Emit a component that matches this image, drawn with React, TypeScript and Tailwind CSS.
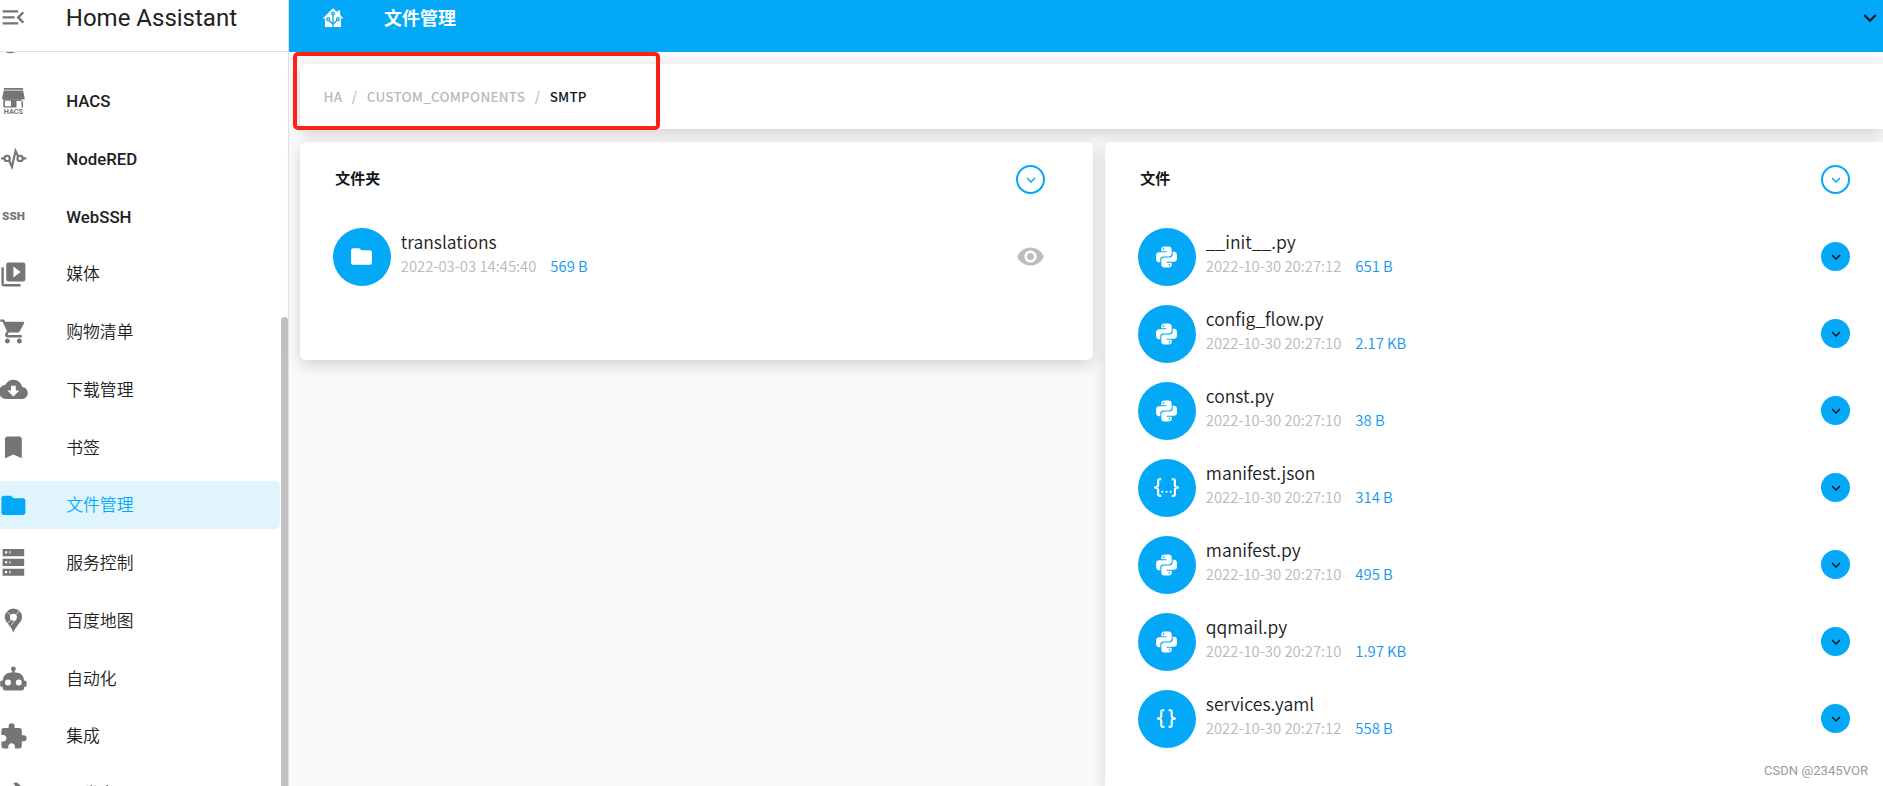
import type { ReactNode } from "react";
import {
  MdBookmark,
  MdCloudDownload,
  MdFolder,
  MdShoppingCart,
  MdVisibility,
} from "react-icons/md";

const paths = {
  menuOpen:
    "M21,15.61L19.59,17L14.58,12L19.59,7L21,8.39L17.44,12L21,15.61M3,6H16V8H3V6M3,13V11H13V13H3M3,18V16H16V18H3Z",
  media:
    "M4,6H2V20A2,2 0 0,0 4,22H18V20H4V6M20,2H8A2,2 0 0,0 6,4V16A2,2 0 0,0 8,18H20A2,2 0 0,0 22,16V4A2,2 0 0,0 20,2M12,14.5V5.5L18,10L12,14.5Z",
  robot:
    "M12,2A2,2 0 0,1 14,4C14,4.74 13.6,5.39 13,5.73V7H14A7,7 0 0,1 21,14H22A1,1 0 0,1 23,15V18A1,1 0 0,1 22,19H21V20A2,2 0 0,1 19,22H5A2,2 0 0,1 3,20V19H2A1,1 0 0,1 1,18V15A1,1 0 0,1 2,14H3A7,7 0 0,1 10,7H11V5.73C10.4,5.39 10,4.74 10,4A2,2 0 0,1 12,2M7.5,13A2.5,2.5 0 0,0 5,15.5A2.5,2.5 0 0,0 7.5,18A2.5,2.5 0 0,0 10,15.5A2.5,2.5 0 0,0 7.5,13M16.5,13A2.5,2.5 0 0,0 14,15.5A2.5,2.5 0 0,0 16.5,18A2.5,2.5 0 0,0 19,15.5A2.5,2.5 0 0,0 16.5,13Z",
  puzzle:
    "M20.5,11H19V7C19,5.89 18.1,5 17,5H13V3.5A2.5,2.5 0 0,0 10.5,1A2.5,2.5 0 0,0 8,3.5V5H4A2,2 0 0,0 2,7V10.8H3.5C5,10.8 6.2,12 6.2,13.5C6.2,15 5,16.2 3.5,16.2H2V20A2,2 0 0,0 4,22H7.8V20.5C7.8,19 9,17.8 10.5,17.8C12,17.8 13.2,19 13.2,20.5V22H17A2,2 0 0,0 19,20V16H20.5A2.5,2.5 0 0,0 23,13.5A2.5,2.5 0 0,0 20.5,11Z",
  hammer:
    "M2,19.63L13.43,8.2L12.72,7.5L14.14,6.07L12,3.89C13.2,2.7 15.09,2.7 16.27,3.89L19.87,7.5L18.45,8.91H21.29L22,9.62L18.45,13.21L17.74,12.5V9.62L16.27,11.04L15.56,10.33L4.13,21.76L2,19.63Z",
  python:
    "M19.14,7.5A2.86,2.86 0 0,1 22,10.36V14.14A2.86,2.86 0 0,1 19.14,17H12C12,17.39 12.32,17.96 12.71,17.96H17V19.64A2.86,2.86 0 0,1 14.14,22.5H9.86A2.86,2.86 0 0,1 7,19.64V15.89C7,14.31 8.28,13.04 9.86,13.04H15.11C16.69,13.04 17.96,11.76 17.96,10.18V7.5H19.14M14.86,19.29C14.46,19.29 14.14,19.59 14.14,20.18C14.14,20.77 14.46,20.89 14.86,20.89A0.71,0.71 0 0,0 15.57,20.18C15.57,19.59 15.25,19.29 14.86,19.29M4.86,17.5C3.28,17.5 2,16.22 2,14.64V10.86C2,9.28 3.28,8 4.86,8H12C12,7.61 11.68,7.04 11.29,7.04H7V5.36C7,3.78 8.28,2.5 9.86,2.5H14.14C15.72,2.5 17,3.78 17,5.36V9.11C17,10.69 15.72,11.96 14.14,11.96H8.89C7.31,11.96 6.04,13.24 6.04,14.82V17.5H4.86M9.14,5.71C9.54,5.71 9.86,5.41 9.86,4.82C9.86,4.23 9.54,4.11 9.14,4.11A0.71,0.71 0 0,0 8.43,4.82C8.43,5.41 8.75,5.71 9.14,5.71Z",
  json: "M5,3H7V5H5V10A2,2 0 0,1 3,12A2,2 0 0,1 5,14V19H7V21H5C3.93,20.73 3,20.1 3,19V15A2,2 0 0,0 1,13H0V11H1A2,2 0 0,0 3,9V5A2,2 0 0,1 5,3M19,3A2,2 0 0,1 21,5V9A2,2 0 0,0 23,11H24V13H23A2,2 0 0,0 21,15V19A2,2 0 0,1 19,21H17V19H19V14A2,2 0 0,1 21,12A2,2 0 0,1 19,10V5H17V3H19M12,15A1,1 0 0,1 13,16A1,1 0 0,1 12,17A1,1 0 0,1 11,16A1,1 0 0,1 12,15M8,15A1,1 0 0,1 9,16A1,1 0 0,1 8,17A1,1 0 0,1 7,16A1,1 0 0,1 8,15M16,15A1,1 0 0,1 17,16A1,1 0 0,1 16,17A1,1 0 0,1 15,16A1,1 0 0,1 16,15Z",
  braces:
    "M8,3A2,2 0 0,0 6,5V9A2,2 0 0,1 4,11H3V13H4A2,2 0 0,1 6,15V19A2,2 0 0,0 8,21H10V19H8V14A2,2 0 0,0 6,12A2,2 0 0,0 8,10V5H10V3M16,3A2,2 0 0,1 18,5V9A2,2 0 0,0 20,11H21V13H20A2,2 0 0,0 18,15V19A2,2 0 0,1 16,21H14V19H16V14A2,2 0 0,1 18,12A2,2 0 0,1 16,10V5H14V3H16Z",
  chevron: "M7.41,8.58L12,13.17L16.59,8.58L18,10L12,16L6,10L7.41,8.58Z",
};

function Icon({ d, className }: { d: string; className?: string }) {
  return (
    <svg viewBox="0 0 24 24" fill="currentColor" className={className}>
      <path d={d} />
    </svg>
  );
}

const side = "size-[28.8px]";

const HacsIcon = () => (
  <svg
    viewBox="0 0 24 24"
    fill="currentColor"
    className="size-[28.8px] overflow-visible"
  >
    <path d="M4 1.6h16v1.6H4z M4 3.8h16l1.3 5.6v1.8H2.7V9.4z" />
    <path
      fillRule="evenodd"
      d="M3.6 11h9.8v7H3.6z M5 12.2v4.6h5V12.2z M13.4 11H20v1.4h-6.6z M18.8 11H20v7h-1.2z M14.6 12.400v5.600h-1.200v-5.600z"
    />
    <text
      x="4"
      y="23.5"
      textLength="16"
      lengthAdjust="spacingAndGlyphs"
      className="font-['Roboto',sans-serif] text-[6px] font-bold"
    >
      HACS
    </text>
  </svg>
);

const NodeRedIcon = () => (
  <svg
    viewBox="0 0 24 24"
    fill="none"
    stroke="currentColor"
    strokeWidth="1.8"
    className={side}
  >
    <path d="M1.8 12h3 M19.6 12h3.2 M8.4 13.8l2.4 5.200 3-13.200 2.200 4.600" />
    <circle cx="6.8" cy="12" r="2.2" />
    <circle cx="17.6" cy="12" r="2.2" />
  </svg>
);

const SshIcon = () => (
  <svg viewBox="0 0 24 24" fill="currentColor" className={side}>
    <text
      x="2.6"
      y="15.2"
      textLength="19"
      lengthAdjust="spacingAndGlyphs"
      className="font-['Roboto',sans-serif] text-[8.8px] font-black"
    >
      SSH
    </text>
  </svg>
);

const ServerIcon = () => (
  <svg viewBox="0 0 24 24" fill="currentColor" className={side}>
    <path
      fillRule="evenodd"
      d="M3 .8h18v6H3z M5 2.8v1.8h1.8V2.8z M8.6 2.8v1.8h1V2.8z M3 9h18v6H3z M5 11v1.8h1.8V11z M8.6 11v1.8h1V11z M3 17.2h18v6H3z M5 19.2V21h1.8v-1.8z M8.6 19.2V21h1v-1.8z"
    />
  </svg>
);

const MapIcon = () => (
  <svg viewBox="0 0 24 24" className={side}>
    <path
      fill="currentColor"
      fillRule="evenodd"
      d="M12 2a7.2 7.2 0 0 0-7.2 7.2c0 3.2 2 4.7 3.6 6.8C9.9 17.9 11 19.5 12 22c1-2.5 2.1-4.1 3.6-6 1.6-2.1 3.6-3.6 3.6-6.8A7.2 7.2 0 0 0 12 2zM12 6.5a2.9 2.9 0 1 1 0 5.8 2.9 2.9 0 0 1 0-5.8z"
    />
    <path
      fill="none"
      stroke="#fff"
      strokeWidth=".6"
      d="M6.4 4.6l3.6 3M14 7.5l3-3.4M10 11.3l-3.5 4M14 11.3l-4 4.7"
    />
  </svg>
);

const DotIcon = () => (
  <svg viewBox="0 0 24 24" fill="currentColor" className={side}>
    <circle cx="9.5" cy="12" r="8.2" />
  </svg>
);

const HomeIcon = () => (
  <svg viewBox="0 0 24 24" className="size-[24px]">
    <path
      fill="currentColor"
      d="M12 2.2l4.6 4.3V4.4h2.6v4.7L22.4 12.4H20V21H4v-8.6H1.6z"
    />
    <g fill="none" stroke="#03a9f6" strokeWidth="1.3">
      <path d="M12 8.5V21 M12 18.2l-4-3.6 M12 18.2l4-3.6" />
      <circle cx="12" cy="7.4" r="1.3" />
      <circle cx="7.2" cy="13.3" r="1.4" />
      <circle cx="16.8" cy="13.3" r="1.4" />
    </g>
  </svg>
);

type NavItem = { label: string; icon: ReactNode; active?: boolean };

const nav: NavItem[] = [
  { label: "", icon: <DotIcon /> },
  { label: "HACS", icon: <HacsIcon /> },
  { label: "NodeRED", icon: <NodeRedIcon /> },
  { label: "WebSSH", icon: <SshIcon /> },
  { label: "媒体", icon: <Icon d={paths.media} className={side} /> },
  { label: "购物清单", icon: <MdShoppingCart className={side} /> },
  { label: "下载管理", icon: <MdCloudDownload className={side} /> },
  { label: "书签", icon: <MdBookmark className={side} /> },
  { label: "文件管理", icon: <MdFolder className={side} />, active: true },
  { label: "服务控制", icon: <ServerIcon /> },
  { label: "百度地图", icon: <MapIcon /> },
  { label: "自动化", icon: <Icon d={paths.robot} className={side} /> },
  { label: "集成", icon: <Icon d={paths.puzzle} className={side} /> },
  { label: "开发者工具", icon: <Icon d={paths.hammer} className={side} /> },
];

const files = [
  { name: "__init__.py", date: "2022-10-30 20:27:12", size: "651 B", icon: paths.python },
  { name: "config_flow.py", date: "2022-10-30 20:27:10", size: "2.17 KB", icon: paths.python },
  { name: "const.py", date: "2022-10-30 20:27:10", size: "38 B", icon: paths.python },
  { name: "manifest.json", date: "2022-10-30 20:27:10", size: "314 B", icon: paths.json },
  { name: "manifest.py", date: "2022-10-30 20:27:10", size: "495 B", icon: paths.python },
  { name: "qqmail.py", date: "2022-10-30 20:27:10", size: "1.97 KB", icon: paths.python },
  { name: "services.yaml", date: "2022-10-30 20:27:12", size: "558 B", icon: paths.braces },
];

function Sidebar() {
  return (
    <aside className="flex h-full w-[289px] shrink-0 flex-col border-r border-[#e0e0e0] bg-white">
      <div className="flex h-[52px] shrink-0 items-start border-b border-[#e0e0e0] text-[#212121]">
        <Icon
          d={paths.menuOpen}
          className="mt-[3px] -ml-px size-[28.8px] shrink-0 text-[#757575]"
        />
        <span className="ml-[38px] text-[24px] leading-[36px]">
          Home Assistant
        </span>
      </div>
      <div className="flex min-h-0 flex-1 overflow-hidden">
        <nav className="-mt-[33px] w-[280px] shrink-0">
          {nav.map((item) => (
            <div
              key={item.label}
              className={`mb-[9.75px] flex h-[48px] items-center rounded-r-[5px] text-[16.8px] ${
                item.active
                  ? "bg-[#e0f4fe] text-[#03a9f6]"
                  : "text-[#757575]"
              }`}
            >
              <span className="-ml-px shrink-0">{item.icon}</span>
              <span
                className={`ml-[38.5px] pt-[2px] font-['Roboto','Noto_Sans_CJK_SC',sans-serif] ${
                  item.active ? "" : "text-[#212121]"
                } ${/^[A-Z]/.test(item.label) ? "font-medium" : "font-[350]"}`}
              >
                {item.label}
              </span>
            </div>
          ))}
        </nav>
        <div className="mt-[265px] ml-px w-[7px] rounded-t-full bg-[#c1c1c1]" />
      </div>
    </aside>
  );
}

function Row({
  name,
  date,
  size,
  icon,
  action,
}: {
  name: string;
  date: string;
  size: string;
  icon: ReactNode;
  action: ReactNode;
}) {
  return (
    <div className="mb-[19.4px] flex h-[57.6px] items-center">
      <div className="flex size-[57.6px] shrink-0 items-center justify-center rounded-full bg-[#03a9f6] text-white">
        {icon}
      </div>
      <div className="ml-[10px] flex-1 pb-[5.5px]">
        <div className="text-[17.5px] leading-[24px] font-[350] text-[#212121]">
          {name}
        </div>
        <div className="flex gap-[14px] text-[14.85px] leading-[24px] font-[350] text-[#b5babb]">
          <span>{date}</span>
          <span className="text-[#1098ee]">{size}</span>
        </div>
      </div>
      {action}
    </div>
  );
}

function CardHeader({ title }: { title: string }) {
  return (
    <div className="flex h-[29px] items-center justify-between pl-[2px]">
      <h2 className="pb-[2px] text-[15px] font-bold text-[#14171a]">
        {title}
      </h2>
      <div className="flex size-[29px] items-center justify-center rounded-full border-2 border-[#03a9f6] text-[#03a9f6]">
        <Icon d={paths.chevron} className="size-[18px]" />
      </div>
    </div>
  );
}

const card = "bg-white shadow-[0_5px_16px_rgba(0,0,0,0.16)]";

export default function App() {
  return (
    <div className="relative flex h-[786px] w-[1883px] overflow-hidden bg-[#fafafa] font-['Roboto','Noto_Sans_CJK_SC',sans-serif]">
      <Sidebar />
      <div className="flex min-w-0 flex-1 flex-col">
        <header className="z-10 flex h-[52px] shrink-0 items-start bg-[#03a9f6] text-white">
          <div className="mt-[6px] ml-[32px]">
            <HomeIcon />
          </div>
          <h1 className="ml-[39px] text-[18px] leading-[38px] font-bold">
            文件管理
          </h1>
          <Icon
            d={paths.chevron}
            className="mt-[5px] ml-auto size-[26px] text-[#14171a]"
          />
        </header>
        <main className="flex flex-1 flex-col pt-[12px] pl-[11px] font-['Noto_Sans_CJK_SC',sans-serif]">
          <div
            className={`${card} flex h-[65px] shrink-0 items-center gap-[9.5px] rounded-l-[6px] pb-px pl-[23.5px] text-[13.4px] font-medium tracking-[0.25px] text-[#b5babb]`}
          >
            <span>HA</span>
            <span>/</span>
            <span>CUSTOM_COMPONENTS</span>
            <span>/</span>
            <span className="text-[#14171a]">SMTP</span>
          </div>
          <div className="mt-[12.5px] flex flex-1 items-start gap-[12px]">
            <section
              className={`${card} h-[218px] w-[793px] shrink-0 rounded-[6px] pt-[23.5px] pr-[48px] pl-[33.2px]`}
            >
              <CardHeader title="文件夹" />
              <div className="mt-[34px]">
                <Row
                  name="translations"
                  date="2022-03-03 14:45:40"
                  size="569 B"
                  icon={<MdFolder className="size-[25px]" />}
                  action={
                    <MdVisibility className="size-[29px] text-[#b9bebf]" />
                  }
                />
              </div>
            </section>
            <section
              className={`${card} h-full flex-1 rounded-tl-[6px] pt-[23.5px] pr-[33px] pl-[33.2px]`}
            >
              <CardHeader title="文件" />
              <div className="mt-[34px]">
                {files.map((file) => (
                  <Row
                    key={file.name}
                    name={file.name}
                    date={file.date}
                    size={file.size}
                    icon={<Icon d={file.icon} className="size-[25px]" />}
                    action={
                      <div className="flex size-[29px] items-center justify-center rounded-full bg-[#03a9f6] text-[#14171a]">
                        <Icon d={paths.chevron} className="size-[18px]" />
                      </div>
                    }
                  />
                ))}
              </div>
            </section>
          </div>
        </main>
      </div>
      {/* highlight frame over the breadcrumb */}
      <div className="absolute top-[52px] left-[293px] z-20 h-[78px] w-[367px] rounded-[5px] border-4 border-[#ff2015]" />
      <div className="absolute right-[15px] bottom-[5px] z-20 font-['Roboto',sans-serif] text-[13.1px] leading-[20px] text-[#9a9a9a]">
        CSDN @2345VOR
      </div>
    </div>
  );
}
